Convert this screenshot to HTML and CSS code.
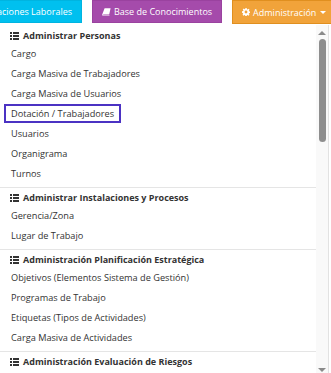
FILE: index.html
```html
<!DOCTYPE html>
<html lang="es">
<head>
<meta charset="utf-8">
<title>Administración</title>
<link rel="stylesheet" href="styles.css">
</head>
<body>
<div class="page">
  <nav class="topbar">
    <a class="btn btn-aqua" href="#">Relaciones Laborales</a>
    <a class="btn btn-purple" href="#"><svg class="ico" width="9" height="8" viewBox="0 0 9 8"><path d="M2.6 0.3 H8.6 L7.2 6.4 H1.6 Q0.9 6.4 1 7 Q1.1 7.5 1.8 7.5 H7.6 L7.4 8 H1.4 Q0 8 0.2 6.6 Z M3.4 1.6 H7 L6.8 2.3 H3.2 Z M3 3.1 H6.6 L6.4 3.8 H2.8 Z" fill="#fff"/></svg>Base de Conocimientos</a>
    <a class="btn btn-orange" href="#"><svg class="ico" width="8" height="8" viewBox="0 0 16 16"><path fill="#fff" fill-rule="evenodd" d="M6.6 0h2.8l.4 2.3 1.3.6 1.9-1.4 2 2-1.4 1.9.6 1.300 2.3.4v2.8l-2.3.4-.6 1.3 1.4 1.9-2 2-1.9-1.4-1.3.6-.4 2.3H6.6l-.4-2.3-1.3-.6-1.9 1.4-2-2 1.4-1.9-.6-1.3L0 9.4V6.6l2.3-.4.6-1.3L1.5 3l2-2 1.9 1.4 1.3-.6zM8 5.2a2.8 2.8 0 1 0 0 5.6 2.8 2.8 0 0 0 0-5.6z"/></svg>Administración <span class="caret"></span></a>
  </nav>
  <div class="menu">
    <ul class="menu-list">
      <li class="menu-header"><svg class="list-ico" width="9" height="8" viewBox="0 0 9 8"><path d="M0 0h2v2H0zM3 0h6v2H3zM0 3h2v2H0zM3 3h6v2H3zM0 6h2v2H0zM3 6h6v2H3z" fill="#333"/></svg>Administrar Personas</li>
      <li class="item"><a href="#">Cargo</a></li>
      <li class="item"><a href="#">Carga Masiva de Trabajadores</a></li>
      <li class="item"><a href="#">Carga Masiva de Usuarios</a></li>
      <li class="item"><a class="focused" href="#">Dotación / Trabajadores</a></li>
      <li class="item"><a href="#">Usuarios</a></li>
      <li class="item"><a href="#">Organigrama</a></li>
      <li class="item"><a href="#">Turnos</a></li>
      <li class="divider"></li>
      <li class="menu-header"><svg class="list-ico" width="9" height="8" viewBox="0 0 9 8"><path d="M0 0h2v2H0zM3 0h6v2H3zM0 3h2v2H0zM3 3h6v2H3zM0 6h2v2H0zM3 6h6v2H3z" fill="#333"/></svg>Administrar Instalaciones y Procesos</li>
      <li class="item"><a href="#">Gerencia/Zona</a></li>
      <li class="item"><a href="#">Lugar de Trabajo</a></li>
      <li class="divider"></li>
      <li class="menu-header"><svg class="list-ico" width="9" height="8" viewBox="0 0 9 8"><path d="M0 0h2v2H0zM3 0h6v2H3zM0 3h2v2H0zM3 3h6v2H3zM0 6h2v2H0zM3 6h6v2H3z" fill="#333"/></svg>Administración Planificación Estratégica</li>
      <li class="item"><a href="#">Objetivos (Elementos Sistema de Gestión)</a></li>
      <li class="item"><a href="#">Programas de Trabajo</a></li>
      <li class="item"><a href="#">Etiquetas (Tipos de Actividades)</a></li>
      <li class="item"><a href="#">Carga Masiva de Actividades</a></li>
      <li class="divider"></li>
      <li class="menu-header"><svg class="list-ico" width="9" height="8" viewBox="0 0 9 8"><path d="M0 0h2v2H0zM3 0h6v2H3zM0 3h2v2H0zM3 3h6v2H3zM0 6h2v2H0zM3 6h6v2H3z" fill="#333"/></svg>Administración Evaluación de Riesgos</li>
    </ul>
    <div class="scrollbar">
      <span class="arrow arrow-up"></span>
      <div class="thumb"></div>
      <span class="arrow arrow-down"></span>
    </div>
  </div>
</div>
</body>
</html>
```

FILE: styles.css
```css
* { box-sizing: border-box; }
html, body { margin: 0; padding: 0; }
body {
  font-family: "Open Sans", "DejaVu Sans", sans-serif;
  font-size: 9px;
  color: #333;
  background: #fff;
  overflow: hidden;
}
.page { width: 331px; height: 373px; overflow: hidden; }

.topbar {
  display: flex;
  align-items: flex-start;
  gap: 10px;
  margin-left: -26px;
  height: 25px;
}
.btn {
  display: flex;
  align-items: center;
  height: 23px;
  padding: 0 9px;
  color: #fff;
  text-decoration: none;
  white-space: nowrap;
  border: 1px solid transparent;
}
.btn-aqua { background: #00c0ef; border-color: #00b4e0; }
.btn-purple { background: #a54bab; border-color: #9a429f; }
.btn-orange { background: #f1a33a; border-color: #e08f1f; height: 24px; padding: 0 5px 0 9px; }
.ico { margin-right: 3px; flex: none; }
.caret {
  display: inline-block;
  width: 0; height: 0;
  margin-left: 4px;
  border-top: 3px solid #fff;
  border-left: 3px solid transparent;
  border-right: 3px solid transparent;
}

.menu {
  display: flex;
  width: 329px;
  height: 349px;
  border-right: 1px solid #e2e2e2;
  background: #fff;
}
.menu-list {
  flex: 1;
  list-style: none;
  margin: 0;
  padding: 3px 0 0;
}
.menu-header {
  display: flex;
  align-items: center;
  height: 15px;
  padding-left: 10px;
  font-weight: 700;
  color: #333;
  white-space: nowrap;
}
.list-ico { margin-right: 4px; flex: none; }
.item {
  display: flex;
  align-items: center;
  height: 20px;
  padding-left: 5px;
  white-space: nowrap;
  font-size: 9.2px;
}
.item a {
  display: inline-block;
  padding: 0 6px;
  line-height: 17px;
  color: #333;
  text-decoration: none;
}
.item a.focused { outline: 2px solid #4b32c3; outline-offset: -1px; }
.divider {
  height: 1px;
  margin: 4px 0 2px;
  background: #e5e5e5;
}

.scrollbar {
  flex: none;
  width: 12px;
  display: flex;
  flex-direction: column;
  align-items: center;
  padding: 6px 0 2px;
  background: #f9f9f9;
}
.arrow {
  width: 0; height: 0;
  border-left: 4px solid transparent;
  border-right: 4px solid transparent;
}
.arrow-up { border-bottom: 4px solid #8a8a8a; }
.arrow-down { border-top: 4px solid #8a8a8a; margin-top: auto; }
.thumb {
  width: 7px;
  height: 103px;
  margin-top: 4px;
  border-radius: 4px;
  background: #8e8e8e;
}
```
